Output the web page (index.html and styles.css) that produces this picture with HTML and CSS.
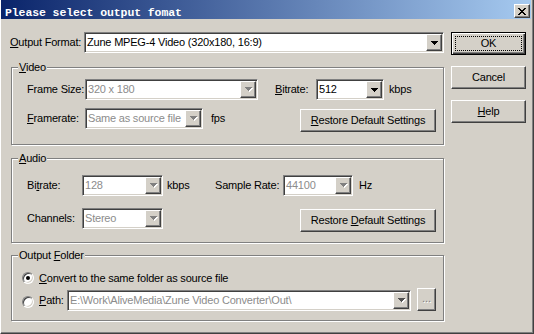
FILE: index.html
```html
<!DOCTYPE html>
<html>
<head>
<meta charset="utf-8">
<title>Please select output fomat</title>
<link rel="stylesheet" href="styles.css">
</head>
<body>
<div class="window">
  <div class="titlebar">
    <span class="title">Please select output fomat</span>
    <span class="close raised">
      <svg width="8" height="7" viewBox="0 0 8 7"><path d="M0 0h2v1H0zM6 0h2v1H6zM1 1h2v1H1zM5 1h2v1H5zM2 2h4v1H2zM3 3h2v1H3zM2 4h4v1H2zM1 5h2v1H1zM5 5h2v1H5zM0 6h2v1H0zM6 6h2v1H6z"/></svg>
    </span>
  </div>
  <div class="body">
    <div class="main">
      <div class="format-row">
        <span class="lbl fmt-lbl"><u>O</u>utput Format:</span>
        <div class="combo fmt-combo">
          <span class="val">Zune MPEG-4 Video (320x180, 16:9)</span>
          <span class="drop raised"><svg width="7" height="4" viewBox="0 0 7 4"><path d="M0 0h7v1H0zM1 1h5v1H1zM2 2h3v1H2zM3 3h1v1H3z"/></svg></span>
        </div>
      </div>

      <div class="group video">
        <div class="legend"><u>V</u>ideo</div>
        <div class="row v1">
          <span class="lbl lw58">Frame Size:</span>
          <div class="combo disabled w173">
            <span class="val">320 x 180</span>
            <span class="drop raised"><svg width="8" height="5" viewBox="0 0 8 5"><path fill="#fff" d="M1 1h7v1H1zM2 2h5v1H2zM3 3h3v1H3zM4 4h1v1H4z"/><path fill="#808080" d="M0 0h7v1H0zM1 1h5v1H1zM2 2h3v1H2zM3 3h1v1H3z"/></svg></span>
          </div>
          <span class="lbl vbit-lbl"><u>B</u>itrate:</span>
          <div class="combo w68">
            <span class="val">512</span>
            <span class="drop raised"><svg width="7" height="4" viewBox="0 0 7 4"><path d="M0 0h7v1H0zM1 1h5v1H1zM2 2h3v1H2zM3 3h1v1H3z"/></svg></span>
          </div>
          <span class="unit u5">kbps</span>
        </div>
        <div class="row v2">
          <span class="lbl lw58"><u>F</u>ramerate:</span>
          <div class="combo disabled w118">
            <span class="val">Same as source file</span>
            <span class="drop raised"><svg width="8" height="5" viewBox="0 0 8 5"><path fill="#fff" d="M1 1h7v1H1zM2 2h5v1H2zM3 3h3v1H3zM4 4h1v1H4z"/><path fill="#808080" d="M0 0h7v1H0zM1 1h5v1H1zM2 2h3v1H2zM3 3h1v1H3z"/></svg></span>
          </div>
          <span class="unit u8">fps</span>
          <span class="btn raised restore"><span><u>R</u>estore Default Settings</span></span>
        </div>
      </div>

      <div class="group audio">
        <div class="legend"><u>A</u>udio</div>
        <div class="row a1">
          <span class="lbl lw55">Bi<u>t</u>rate:</span>
          <div class="combo disabled w81">
            <span class="val">128</span>
            <span class="drop raised"><svg width="8" height="5" viewBox="0 0 8 5"><path fill="#fff" d="M1 1h7v1H1zM2 2h5v1H2zM3 3h3v1H3zM4 4h1v1H4z"/><path fill="#808080" d="M0 0h7v1H0zM1 1h5v1H1zM2 2h3v1H2zM3 3h1v1H3z"/></svg></span>
          </div>
          <span class="unit u4 kbps-a">kbps</span>
          <span class="lbl lw68">Sample Rate:</span>
          <div class="combo disabled w70">
            <span class="val">44100</span>
            <span class="drop raised"><svg width="8" height="5" viewBox="0 0 8 5"><path fill="#fff" d="M1 1h7v1H1zM2 2h5v1H2zM3 3h3v1H3zM4 4h1v1H4z"/><path fill="#808080" d="M0 0h7v1H0zM1 1h5v1H1zM2 2h3v1H2zM3 3h1v1H3z"/></svg></span>
          </div>
          <span class="unit u6">Hz</span>
        </div>
        <div class="row a2">
          <span class="lbl lw55">Channels:</span>
          <div class="combo disabled w81">
            <span class="val">Stereo</span>
            <span class="drop raised"><svg width="8" height="5" viewBox="0 0 8 5"><path fill="#fff" d="M1 1h7v1H1zM2 2h5v1H2zM3 3h3v1H3zM4 4h1v1H4z"/><path fill="#808080" d="M0 0h7v1H0zM1 1h5v1H1zM2 2h3v1H2zM3 3h1v1H3z"/></svg></span>
          </div>
          <span class="btn raised restore"><span>Restore <u>D</u>efault Settings</span></span>
        </div>
      </div>

      <div class="group folder">
        <div class="legend">Output <u>F</u>older</div>
        <div class="row f1">
          <span class="radio"><span class="dot"></span></span>
          <span class="lbl rlbl"><u>C</u>onvert to the same folder as source file</span>
        </div>
        <div class="row f2">
          <span class="radio"></span>
          <span class="lbl rlbl path-lbl"><u>P</u>ath:</span>
          <div class="combo disabled w344">
            <span class="val">E:\Work\AliveMedia\Zune Video Converter\Out\</span>
            <span class="drop raised"><svg width="8" height="5" viewBox="0 0 8 5"><path fill="#fff" d="M1 1h7v1H1zM2 2h5v1H2zM3 3h3v1H3zM4 4h1v1H4z"/><path fill="#505050" d="M0 0h7v1H0zM1 1h5v1H1zM2 2h3v1H2zM3 3h1v1H3z"/></svg></span>
          </div>
          <span class="btn raised browse"><span>...</span></span>
        </div>
      </div>
    </div>

    <div class="buttons">
      <span class="btn default"><span class="focus">OK</span></span>
      <span class="btn raised side"><span>Cancel</span></span>
      <span class="btn raised side"><span><u>H</u>elp</span></span>
    </div>
  </div>
</div>
</body>
</html>
```

FILE: styles.css
```css
* { box-sizing: border-box; }

html, body {
  margin: 0;
  padding: 0;
}

body {
  width: 534px;
  height: 334px;
  overflow: hidden;
  background: #D4D0C8;
  font-family: "Liberation Sans", Arial, sans-serif;
  font-size: 11px;
  letter-spacing: -0.2px;
  color: #000;
}

u { text-decoration: underline; text-underline-offset: 1px; }

.window {
  width: 534px;
  height: 334px;
  background: #D4D0C8;
  border-left: 1px solid #fff;
  border-right: 1px solid #404040;
  border-bottom: 1px solid #404040;
  box-shadow: inset -1px -1px 0 #808080;
  padding: 0 2px 2px 0;
}

/* ---------- title bar ---------- */
.titlebar {
  height: 19px;
  display: flex;
  justify-content: space-between;
  align-items: flex-start;
  background: linear-gradient(to right, #0A246A, #A6CAF0);
}

.title {
  margin: 6px 0 0 4px;
  font-family: "Liberation Mono", "Courier New", monospace;
  font-weight: bold;
  font-size: 11.5px;
  line-height: 13px;
  letter-spacing: -0.1px;
  color: #fff;
  white-space: nowrap;
}

.close {
  width: 16px;
  height: 14px;
  margin: 4px 1px 0 0;
  display: flex;
  align-items: center;
  justify-content: center;
  padding: 1px 1px 0 0;
}

/* ---------- 3D primitives ---------- */
.raised {
  background: #D4D0C8;
  border: 1px solid;
  border-color: #fff #404040 #404040 #fff;
  box-shadow: inset -1px -1px 0 #808080;
}

.combo {
  height: 21px;
  display: flex;
  background: #fff;
  border: 1px solid;
  border-color: #808080 #fff #fff #808080;
  box-shadow: inset 1px 1px 0 #404040, inset -1px -1px 0 #D4D0C8;
  padding: 1px;
  flex: none;
}

.combo .val {
  flex: 1;
  min-width: 0;
  padding-left: 1px;
  line-height: 17px;
  white-space: nowrap;
  overflow: hidden;
}

.combo.disabled .val { color: #8c8c8c; }

.drop {
  width: 16px;
  height: 17px;
  flex: none;
  display: flex;
  align-items: center;
  justify-content: center;
  padding-left: 1px;
}

.drop svg { display: block; }

/* ---------- layout ---------- */
.body {
  display: flex;
  gap: 7px;
  padding: 13px 5px 0 9px;
}

.main {
  width: 434px;
  flex: none;
}

.format-row {
  display: flex;
  align-items: center;
  height: 21px;
}

.lbl {
  line-height: 13px;
  white-space: nowrap;
  flex: none;
}

.fmt-lbl { width: 74px; }
.fmt-combo { width: 360px; }

.group {
  margin-left: 1px;
  border: 1px solid #808080;
  box-shadow: inset 1px 1px 0 #fff, 1px 1px 0 #fff;
}

.legend {
  width: fit-content;
  height: 13px;
  line-height: 13px;
  margin: -7px 0 0 6px;
  padding: 0 1px;
  background: #D4D0C8;
  white-space: nowrap;
}

.row {
  display: flex;
  align-items: center;
  padding: 0 7px 0 15px;
}

.video { margin-top: 14px; padding-bottom: 12px; }
.audio { margin-top: 13px; padding-bottom: 10px; }
.folder { margin-top: 12px; padding-bottom: 9px; }

.v1 { margin-top: 5px; height: 21px; }
.v2 { margin-top: 8px; align-items: flex-start; }
.v2 .lbl, .v2 .unit { margin-top: 4px; }
.v2 .restore { margin-top: 1px; }

.a1 { margin-top: 10px; height: 21px; }
.a2 { margin-top: 12px; align-items: flex-start; }
.a2 .lbl { margin-top: 4px; }
.a2 .restore { margin-top: 1px; }

.f1 { margin-top: 8px; height: 16px; padding-left: 10px; }
.f2 { margin-top: 2px; padding-left: 10px; align-items: flex-start; }
.f2 .radio { margin-top: 8px; }
.f2 .lbl { margin-top: 6px; }
.f2 .combo { margin-top: 2px; }

.lw58 { width: 58px; }
.lw55 { width: 55px; }
.lw68 { width: 68px; }
.vbit-lbl { margin-left: 17px; width: 41px; }

.w173 { width: 173px; }
.w68 { width: 68px; }
.w118 { width: 118px; }
.w81 { width: 81px; }
.w70 { width: 70px; }
.w344 { width: 344px; }

.unit { line-height: 13px; flex: none; }
.u4 { margin-left: 4px; }
.u5 { margin-left: 5px; }
.u6 { margin-left: 6px; }
.u8 { margin-left: 8px; }
.kbps-a { width: 48px; }

/* ---------- buttons ---------- */
.btn {
  display: flex;
  align-items: center;
  justify-content: center;
  height: 23px;
  line-height: 13px;
  white-space: nowrap;
  flex: none;
}

.restore {
  width: 136px;
  margin-left: auto;
}

.browse {
  width: 19px;
  margin-left: 6px;
  color: #808080;
  text-shadow: 1px 1px 0 #fff;
  letter-spacing: 0;
  padding-bottom: 2px;
}

.buttons {
  width: 75px;
  flex: none;
  display: flex;
  flex-direction: column;
  gap: 11px;
}

.side { width: 75px; }

.default {
  width: 75px;
  background: #D4D0C8;
  border: 1px solid #000;
  box-shadow: inset 1px 1px 0 #fff, inset -1px -1px 0 #404040, inset -2px -2px 0 #808080;
  padding: 3px;
  align-items: stretch;
}

.focus {
  flex: 1;
  display: flex;
  align-items: center;
  justify-content: center;
  border: 1px dotted #000;
}

/* ---------- radio ---------- */
.radio {
  width: 12px;
  height: 12px;
  flex: none;
  border-radius: 50%;
  border: 1px solid;
  border-color: #808080 #fff #fff #808080;
  box-shadow: inset 1px 1px 0 #404040, inset -1px -1px 0 #D4D0C8;
  background: #fff;
  display: flex;
  align-items: center;
  justify-content: center;
}

.dot {
  width: 4px;
  height: 4px;
  border-radius: 50%;
  background: #000;
}

.rlbl { margin-left: 5px; }
.path-lbl { width: 28px; }
```
